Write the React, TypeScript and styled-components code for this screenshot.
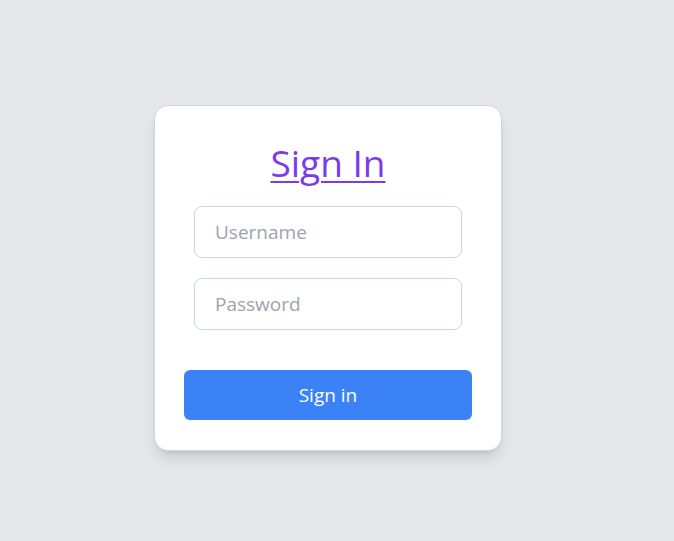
import styled, { createGlobalStyle } from "styled-components";

const GlobalStyle = createGlobalStyle`
  html, body {
    margin: 0;
    padding: 0;
    background-color: #e5e7eb;
    font-family: "Segoe UI", "Open Sans", "Noto Sans", sans-serif;
  }
  * {
    box-sizing: border-box;
  }
`;

const Page = styled.div`
  min-height: 100vh;
  display: flex;
  align-items: flex-start;
  padding: 105px 0 0 154px;
`;

const Card = styled.form`
  width: 348px;
  background-color: #ffffff;
  border: 1px solid #cbd5e1;
  border-radius: 14px;
  box-shadow: 0 10px 15px -3px rgba(0, 0, 0, 0.12),
    0 4px 6px -4px rgba(0, 0, 0, 0.12);
  padding: 29px 29px 30px;
  display: flex;
  flex-direction: column;
  align-items: center;
`;

const Title = styled.a`
  font-size: 37px;
  line-height: 1;
  color: #7c3aed;
  text-decoration: underline;
  text-underline-offset: 4px;
  text-decoration-thickness: 2px;
  margin: 9px 0 25px;
`;

const Fields = styled.div`
  display: flex;
  flex-direction: column;
  gap: 20px;
  width: 268px;
`;

const Input = styled.input`
  width: 100%;
  height: 52px;
  padding: 0 20px;
  border: 1px solid #cbd5e1;
  border-radius: 8px;
  font-family: inherit;
  font-size: 19px;
  color: #374151;
  outline: none;

  &::placeholder {
    color: #9ca3af;
  }
`;

const SubmitButton = styled.button`
  margin-top: 40px;
  width: 100%;
  height: 50px;
  border: none;
  border-radius: 6px;
  background-color: #3b82f6;
  color: #ffffff;
  font-family: inherit;
  font-size: 19px;
  cursor: pointer;
`;

export default function App() {
  return (
    <>
      <GlobalStyle />
      <Page>
        <Card onSubmit={(e) => e.preventDefault()}>
          <Title href="#">Sign In</Title>
          <Fields>
            <Input type="text" placeholder="Username" />
            <Input type="password" placeholder="Password" />
          </Fields>
          <SubmitButton type="submit">Sign in</SubmitButton>
        </Card>
      </Page>
    </>
  );
}
